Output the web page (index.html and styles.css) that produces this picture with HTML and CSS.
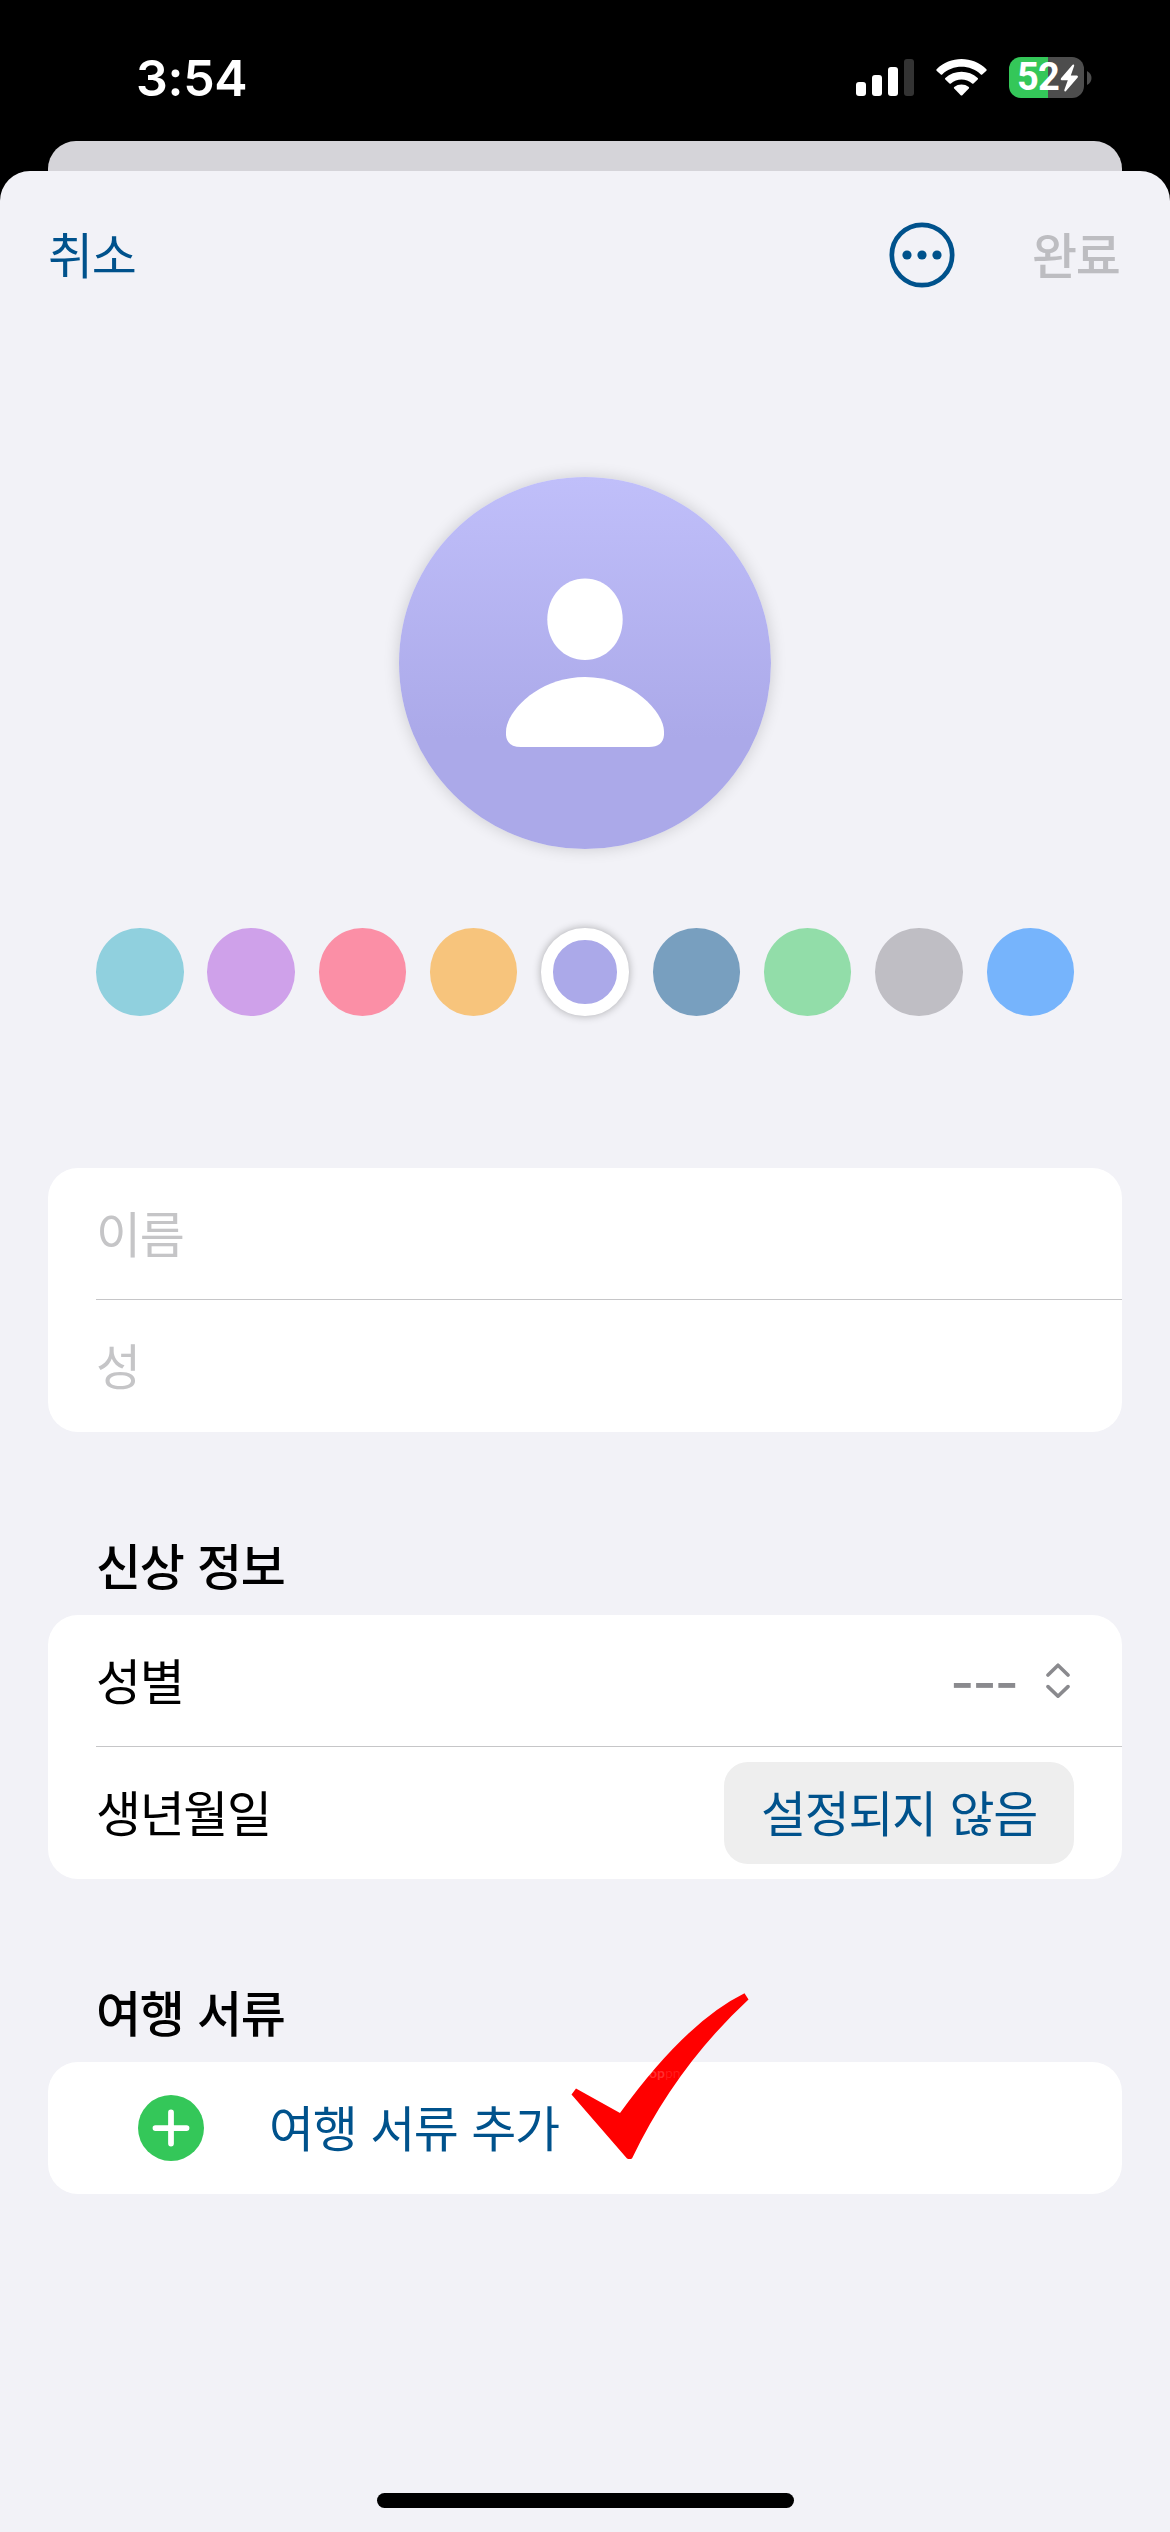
FILE: index.html
```html
<!DOCTYPE html>
<html lang="ko">
<head>
<meta charset="utf-8">
<title>여행 서류</title>
<link rel="stylesheet" href="styles.css">
</head>
<body>
<div class="screen">
  <header class="status">
    <span class="time">3:54</span>
    <div class="indicators">
      <svg class="signal" width="58" height="37" viewBox="0 0 58 37" fill="#fff">
        <rect x="0" y="23" width="10" height="14" rx="3"/>
        <rect x="16" y="16" width="10" height="21" rx="3"/>
        <rect x="32" y="8" width="10" height="29" rx="3"/>
        <rect x="48" y="0" width="10" height="37" rx="3" fill="#333"/>
      </svg>
      <svg class="wifi" width="51" height="37" viewBox="0 0 51 37" fill="#fff">
        <path d="M.6 10.2C14.3-3.4 36.700-3.4 50.400 10.200Q51 11 50.400 11.700L46.200 15.600Q45.500 16.100 44.800 15.500C34.200 5.300 16.800 5.300 6.200 15.500Q5.500 16.100 4.800 15.600L.6 11.700Q0 11 .6 10.200Z"/>
        <path d="M9.300 19C18.300 10.700 32.700 10.700 41.700 19Q42.400 19.700 41.700 20.400L37.500 24.400Q36.800 25 36.100 24.400C30.200 19.100 20.800 19.100 14.900 24.400Q14.200 25 13.500 24.400L9.300 20.400Q8.600 19.700 9.300 19Z"/>
        <path d="M18.200 28C22.400 24.700 28.600 24.700 32.800 28Q33.500 28.700 32.800 29.500L26.300 36.200Q25.500 37 24.700 36.200L18.200 29.500Q17.500 28.700 18.200 28Z"/>
      </svg>
      <div class="battery">
        <span class="level">52</span>
        <svg width="19" height="28" viewBox="0 0 19 28" fill="#fff"><path d="M12.600.8 1 14.300Q0 16 1.600 16.200H7.800L4.300 26Q4.100 28 5.800 27.200L17.700 13.500Q18.600 11.800 17 11.500H10.800L14.200 1.800Q14.300 0 12.600.8Z"/></svg>
      </div>
      <svg class="nub" width="5" height="14" viewBox="0 0 5 14"><path d="M0 0Q4.500 2.500 4.500 7T0 14Z" fill="#4d4d4d"/></svg>
    </div>
  </header>
  <div class="back-sheet"></div>
  <main class="sheet">
    <nav class="nav">
      <span class="cancel">취소</span>
      <svg class="more" width="66" height="66" viewBox="0 0 66 66" fill="#00528c">
        <circle cx="33" cy="33" r="30.200" fill="none" stroke="#00528c" stroke-width="4.700"/>
        <circle cx="18" cy="33" r="4.600"/><circle cx="33" cy="33" r="4.600"/><circle cx="48" cy="33" r="4.600"/>
      </svg>
      <span class="done">완료</span>
    </nav>
    <div class="avatar">
      <svg width="158" height="170" viewBox="0 0 158 170" fill="#fff">
        <path d="M79 .5C100 .5 116.700 18 116.700 41.500S100 82 79 82 41.300 65 41.300 41.500 58 .5 79 .5Z"/>
        <path d="M79 99C126 99 158 134 158 153.500V157Q157 169 143 169H15Q1 169 0 157V153.500C0 134 32 99 79 99Z"/>
      </svg>
    </div>
    <div class="swatches">
      <i class="swatch teal"></i><i class="swatch purple"></i><i class="swatch pink"></i>
      <i class="swatch orange"></i><i class="swatch violet selected"></i><i class="swatch steel"></i>
      <i class="swatch green"></i><i class="swatch gray"></i><i class="swatch blue"></i>
    </div>
    <section class="card names">
      <div class="row placeholder"><span>이름</span></div>
      <div class="row placeholder"><span>성</span></div>
    </section>
    <h2 class="heading">신상 정보</h2>
    <section class="card">
      <div class="row">
        <span>성별</span>
        <span class="value">---</span>
        <svg class="chevrons" width="24" height="36" viewBox="0 0 24 36" fill="none" stroke="#8a8a8e" stroke-width="3.600" stroke-linecap="round" stroke-linejoin="round">
          <path d="M2 12 12 2.200 22 12M2 23.600 12 33.200 22 23.600"/>
        </svg>
      </div>
      <div class="row">
        <span>생년월일</span>
        <div class="pill"><span>설정되지 않음</span></div>
      </div>
    </section>
    <h2 class="heading">여행 서류</h2>
    <section class="card travel">
      <div class="row add">
        <svg width="66" height="66" viewBox="0 0 66 66">
          <circle cx="33" cy="33" r="33" fill="#34c759"/>
          <path d="M33 19.500V46.500M19.500 33H46.500" transform="translate(33 33) scale(1.150) translate(-33 -33)" stroke="#fff" stroke-width="5" stroke-linecap="round"/>
        </svg>
        <span>여행 서류 추가</span>
      </div>
      <svg class="check" width="180" height="168" viewBox="570 1992 180 168">
        <path d="M576 2088.500 571.500 2094.500 627 2158.500Q629.500 2159.500 632 2158.500Q675.700 2067 748.500 1999.500L744.500 1993.300Q686 2022 620 2113Z" fill="#f00"/>
        <text x="649" y="2078" font-size="14" fill="#fff" fill-opacity=".2"><tspan font-weight="700">op</tspan><tspan font-weight="400" fill-opacity=".12">pn</tspan></text>
      </svg>
    </section>
    <div class="home"></div>
  </main>
</div>
</body>
</html>
```
FILE: styles.css
```css
* { box-sizing: border-box; }
body {
  margin: 0;
  background: #000;
  font-family: "Noto Sans CJK KR", sans-serif;
  font-size: 49px;
  line-height: 1;
  color: #000;
}
svg { display: block; flex: none; }
.screen {
  width: 1170px;
  height: 2532px;
  display: flex;
  flex-direction: column;
  overflow: hidden;
}
.status {
  height: 141px;
  padding: 0 78px 0 136px;
  display: flex;
  justify-content: space-between;
}
.time {
  font: 600 50px/50px Inter, sans-serif;
  letter-spacing: -.3px;
  color: #fff;
  margin-top: 53px;
}
.indicators {
  display: flex;
  align-items: center;
  height: 41px;
  margin-top: 57px;
}
.wifi { margin-left: 22px; }
.battery {
  width: 75px;
  height: 41px;
  margin-left: 22px;
  padding-left: 8px;
  border-radius: 12px;
  background: linear-gradient(90deg, #34c759 39px, #4d4d4d 39px);
  display: flex;
  align-items: center;
}
.level {
  width: 43px;
  font: 700 38px/41px Roboto, sans-serif;
  letter-spacing: -.8px;
  color: #fff;
}
.nub { margin-left: 3px; }
.back-sheet {
  height: 30px;
  margin: 0 48px;
  background: #d5d4d9;
  border-radius: 28px 28px 0 0;
}
.sheet {
  flex: 1;
  background: #f2f2f7;
  border-radius: 30px 30px 0 0;
  padding: 0 48px;
  display: flex;
  flex-direction: column;
}
.nav {
  height: 168px;
  display: flex;
  align-items: center;
  color: #00528c;
  letter-spacing: -1.4px;
}
.nav span { padding-bottom: 6px; }
.more { margin-left: auto; }
.done {
  width: 90px;
  margin-left: 77px;
  color: #bdbdc1;
  font-weight: 500;
}
.avatar {
  width: 372px;
  height: 372px;
  margin: 138px auto 0;
  padding: 101px 107px;
  border-radius: 50%;
  background: linear-gradient(#c0bffa, #aba9e9 70%);
  box-shadow: 0 0 16px rgba(0, 0, 0, .16);
}
.swatches {
  display: flex;
  justify-content: space-between;
  margin: 79px 48px 0;
}
.swatch {
  width: 87.500px;
  height: 87.500px;
  border-radius: 50%;
}
.teal { background: #90d0de; }
.purple { background: #cfa1ea; }
.pink { background: #fb8fa6; }
.orange { background: #f7c47c; }
.violet { background: #aba9e9; }
.steel { background: #789fbf; }
.green { background: #92dda9; }
.gray { background: #bfbec4; }
.blue { background: #76b4fc; }
.selected {
  border: 12px solid #fff;
  box-shadow: 0 0 8px rgba(0, 0, 0, .3);
}
.card {
  position: relative;
  background: #fff;
  border-radius: 30px;
  padding-left: 48px;
}
.names { margin-top: 152.500px; }
.row {
  height: 132px;
  padding-right: 48px;
  display: flex;
  align-items: center;
  letter-spacing: -1.4px;
  word-spacing: 1.500px;
}
.row span { padding-bottom: 6px; }
.row + .row { box-shadow: 0 -1px #c6c6c8; }
.placeholder { color: #c5c5c7; }
.heading {
  height: 183px;
  margin: 0;
  padding: 107px 0 0 48px;
  font-size: 49px;
  line-height: 49px;
  font-weight: 500;
  letter-spacing: -1.3px;
  word-spacing: 1px;
}
.row .value {
  margin-left: auto;
  padding: 3px 0 0;
  font-family: Inter, sans-serif;
  font-size: 52px;
  font-weight: 500;
  letter-spacing: -1.8px;
  color: #8a8a8e;
}
.chevrons { margin: 0 4px 0 29px; }
.pill {
  width: 350px;
  height: 102px;
  margin-left: auto;
  border-radius: 24px;
  background: #eee;
  color: #00528c;
  display: flex;
  align-items: center;
  justify-content: center;
  white-space: nowrap;
}
.add {
  padding-left: 42px;
  gap: 65px;
  color: #00528c;
}
.check {
  position: absolute;
  left: 522px;
  top: -70px;
  font-family: Lato, sans-serif;
}
.home {
  width: 417px;
  height: 15px;
  margin: auto auto 24px;
  border-radius: 8px;
  background: #000;
}
```
